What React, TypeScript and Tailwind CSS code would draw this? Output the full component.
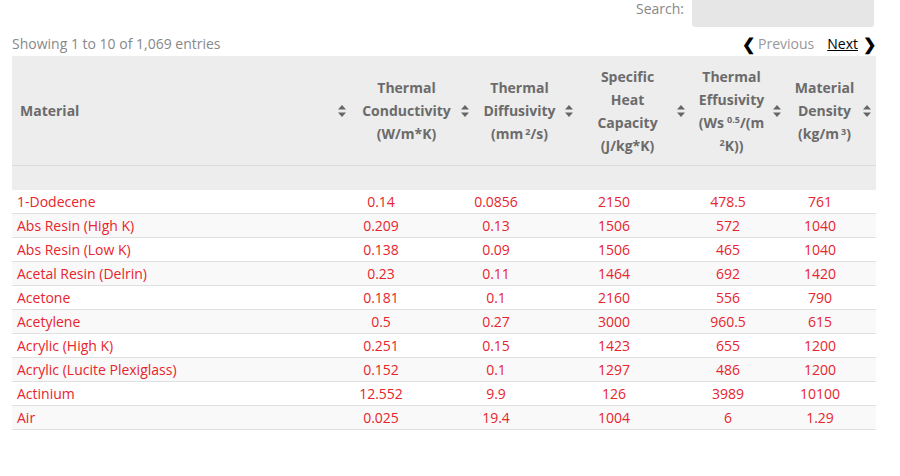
const rows = [
  ["1-Dodecene","0.14","0.0856","2150","478.5","761"],
  ["Abs Resin (High K)","0.209","0.13","1506","572","1040"],
  ["Abs Resin (Low K)","0.138","0.09","1506","465","1040"],
  ["Acetal Resin (Delrin)","0.23","0.11","1464","692","1420"],
  ["Acetone","0.181","0.1","2160","556","790"],
  ["Acetylene","0.5","0.27","3000","960.5","615"],
  ["Acrylic (High K)","0.251","0.15","1423","655","1200"],
  ["Acrylic (Lucite Plexiglass)","0.152","0.1","1297","486","1200"],
  ["Actinium","12.552","9.9","126","3989","10100"],
  ["Air","0.025","19.4","1004","6","1.29"],
];
const widths = ["w-[340px]","w-[122px]","w-[104px]","w-[112px]","w-[96px]","w-[90px]"];
const pads = ["","pr-[64px]","pr-[60px]","pr-[40px]","pr-[20px]","pr-[22px]"];
function Sort() {
  return (
    <svg width="8" height="12" viewBox="0 0 8 12" className="shrink-0">
      <path d="M4 0 L8 4.5 H0 Z M4 12 L8 7.5 H0 Z" fill="#666" />
    </svg>
  );
}
const headers: React.ReactNode[] = [
  null,
  <>Thermal<br/>Conductivity<br/>(W/m*K)</>,
  <>Thermal<br/>Diffusivity<br/>(mm<sup className="text-[9px] ml-[2px]">2</sup>/s)</>,
  <>Specific<br/>Heat<br/>Capacity<br/>(J/kg*K)</>,
  <>Thermal<br/>Effusivity<br/>(Ws<sup className="text-[9px] ml-[3px]">0.5</sup>/(m<br/><sup className="text-[9px]">2</sup>K))</>,
  <>Material<br/>Density<br/>(kg/m<sup className="text-[9px] ml-[2px]">3</sup>)</>,
];
export default function App() {
  return (
    <div className="w-[900px] h-[476px] bg-white text-[14px]" style={{fontFamily: '"Open Sans", sans-serif'}}>
      <div className="flex justify-end items-center h-[27px] pr-[26px]">
        <span className="text-[#888] mr-[8px] -mt-[10px]">Search:</span>
        <div className="w-[182px] h-[27px] bg-[#e6e6e6] rounded-b-[3px]"></div>
      </div>
      <div className="flex justify-between items-center h-[29px] pl-[12px] pr-[24px] pt-[4px]">
        <span className="text-[#888]">Showing 1 to 10 of 1,069 entries</span>
        <div className="flex items-center gap-[3px]">
          <span className="font-bold text-black text-[16px] leading-none">❮</span>
          <span className="text-[#999] mr-[10px]">Previous</span>
          <span className="text-black underline">Next</span>
          <span className="font-bold text-black text-[16px] leading-none ml-[2px]">❯</span>
        </div>
      </div>
      <div className="ml-[12px] w-[864px]">
        <div className="flex h-[110px] bg-[#ededed] border-b border-[#dcdcdc] font-bold text-[#6b6b6b] leading-[23px]">
          <div className={`${widths[0]} flex items-center justify-between pl-[8px] pr-[6px]`}>
            <span>Material</span><Sort />
          </div>
          {headers.slice(1).map((h, i) => (
            <div key={i} className={`${widths[i + 1]} flex items-center pr-[5px]`}>
              <div className="flex-1 text-center">{h}</div><Sort />
            </div>
          ))}
        </div>
        <div className="h-[24px] bg-[#ededed]"></div>
        {rows.map((r, ri) => (
          <div key={ri} className={`flex h-[24px] items-center border-b border-[#e0e0e0] text-[#e8242c] ${ri % 2 ? "bg-[#f9f9f9]" : "bg-white"}`}>
            {r.map((c, ci) => (
              <div key={ci} className={`${widths[ci]} ${ci === 0 ? "pl-[5px]" : `text-center ${pads[ci]}`}`}>{c}</div>
            ))}
          </div>
        ))}
      </div>
    </div>
  );
}
